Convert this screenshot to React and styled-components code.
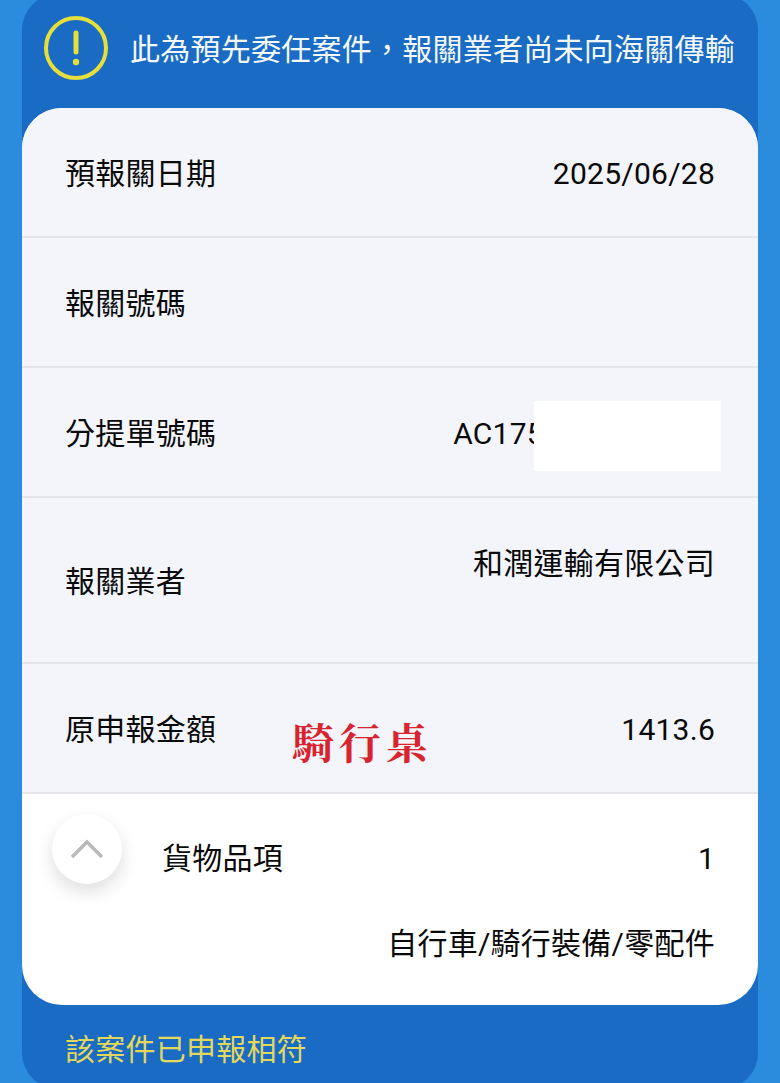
import React from "react";
import styled, { createGlobalStyle } from "styled-components";

const cjk = `Roboto, "Noto Sans CJK TC", "Noto Sans CJK SC", sans-serif`;

const Global = createGlobalStyle`
  html, body { margin: 0; padding: 0; }
  body { width: 780px; height: 1083px; overflow: hidden; background: #2b8bdd; font-family: ${cjk}; }
`;

const Page = styled.div`
  width: 780px;
  height: 1083px;
  overflow: hidden;
  background: #2b8bdd;
  padding: 0 22px;
  box-sizing: border-box;
`;

const Panel = styled.main`
  margin-top: -6px;
  height: 1095px;
  background: #196bc4;
  border-radius: 36px;
  display: flex;
  flex-direction: column;
`;

const Notice = styled.header`
  height: 114px;
  padding: 0 0 6px 22px;
  box-sizing: border-box;
  display: flex;
  align-items: center;
  gap: 22px;
  color: #f4f8fd;
  font-size: 30px;
  line-height: 40px;
  letter-spacing: 0.25px;
  white-space: nowrap;
`;

const NoticeText = styled.span`
  padding-top: 4px;
`;

const Card = styled.section`
  position: relative;
  height: 897px;
  border-radius: 40px;
  overflow: hidden;
  background: #fff;
  color: #0a0a0a;
`;

const Row = styled.div`
  height: ${(p) => p.$h}px;
  box-sizing: border-box;
  background: #f3f5fb;
  border-bottom: 2px solid #e4e6ea;
  padding: 3px 43px 0;
  display: flex;
  justify-content: space-between;
  align-items: center;
  font-size: 30px;
  line-height: 40px;
  letter-spacing: 0.25px;
  white-space: nowrap;
`;

const Label = styled.span`
  display: block;
`;

const Value = styled.span`
  display: block;
`;

const RaisedValue = styled(Value)`
  margin-top: -36px;
`;

const Goods = styled.div`
  position: relative;
  height: 212px;
  box-sizing: border-box;
  padding: 45px 43px 0 140px;
  font-size: 30px;
  line-height: 40px;
  letter-spacing: 0.25px;
`;

const GoodsHead = styled.div`
  display: flex;
  justify-content: space-between;
`;

const GoodsList = styled.div`
  margin-top: 45px;
  text-align: right;
`;

const Toggle = styled.button`
  position: absolute;
  left: 30px;
  top: 20px;
  width: 70px;
  height: 70px;
  padding: 0;
  border: 0;
  border-radius: 50%;
  background: #fff;
  box-shadow: 0 8px 18px rgba(0, 0, 0, 0.13);
  display: flex;
  align-items: center;
  justify-content: center;
`;

const Redaction = styled.div`
  position: absolute;
  left: 512px;
  top: 293px;
  width: 187px;
  height: 70px;
  background: #fff;
`;

const Stamp = styled.div`
  position: absolute;
  left: 270px;
  top: 608px;
  color: #d8242f;
  font-family: "Noto Serif CJK TC", "Liberation Serif", "Noto Sans CJK TC", serif;
  font-size: 42px;
  font-weight: 700;
  line-height: 50px;
  letter-spacing: 5px;
  white-space: nowrap;
`;

const Verdict = styled.footer`
  padding: 25px 43px 0;
  color: #e3d85c;
  font-size: 30px;
  line-height: 40px;
  letter-spacing: 0.25px;
`;

const AlertIcon = () => (
  <svg width="64" height="64" viewBox="0 0 64 64" fill="none" aria-hidden="true">
    <circle cx="32" cy="32" r="30" stroke="#e6de3a" strokeWidth="4" />
    <path d="M32 17v19" stroke="#e6de3a" strokeWidth="5" strokeLinecap="round" />
    <circle cx="32" cy="46" r="3.2" fill="#e6de3a" />
  </svg>
);

const ChevronUp = () => (
  <svg width="34" height="20" viewBox="0 0 34 20" fill="none" aria-hidden="true">
    <path d="M2 18 17 3l15 15" stroke="#b9b9b9" strokeWidth="3.4" />
  </svg>
);

export default function App() {
  return (
    <Page>
      <Global />
      <Panel>
        <Notice>
          <AlertIcon />
          <NoticeText>此為預先委任案件，報關業者尚未向海關傳輸</NoticeText>
        </Notice>
        <Card>
          <Row $h={130}>
            <Label>預報關日期</Label>
            <Value>2025/06/28</Value>
          </Row>
          <Row $h={130}>
            <Label>報關號碼</Label>
          </Row>
          <Row $h={130}>
            <Label>分提單號碼</Label>
            <Value>AC1750000000000</Value>
          </Row>
          <Row $h={166}>
            <Label>報關業者</Label>
            <RaisedValue>和潤運輸有限公司</RaisedValue>
          </Row>
          <Row $h={130}>
            <Label>原申報金額</Label>
            <Value>1413.6</Value>
          </Row>
          <Goods>
            <GoodsHead>
              <span>貨物品項</span>
              <span>1</span>
            </GoodsHead>
            <GoodsList>自行車/騎行裝備/零配件</GoodsList>
            <Toggle aria-label="收合">
              <ChevronUp />
            </Toggle>
          </Goods>
          <Redaction />
          <Stamp>騎行桌</Stamp>
        </Card>
        <Verdict>該案件已申報相符</Verdict>
      </Panel>
    </Page>
  );
}
